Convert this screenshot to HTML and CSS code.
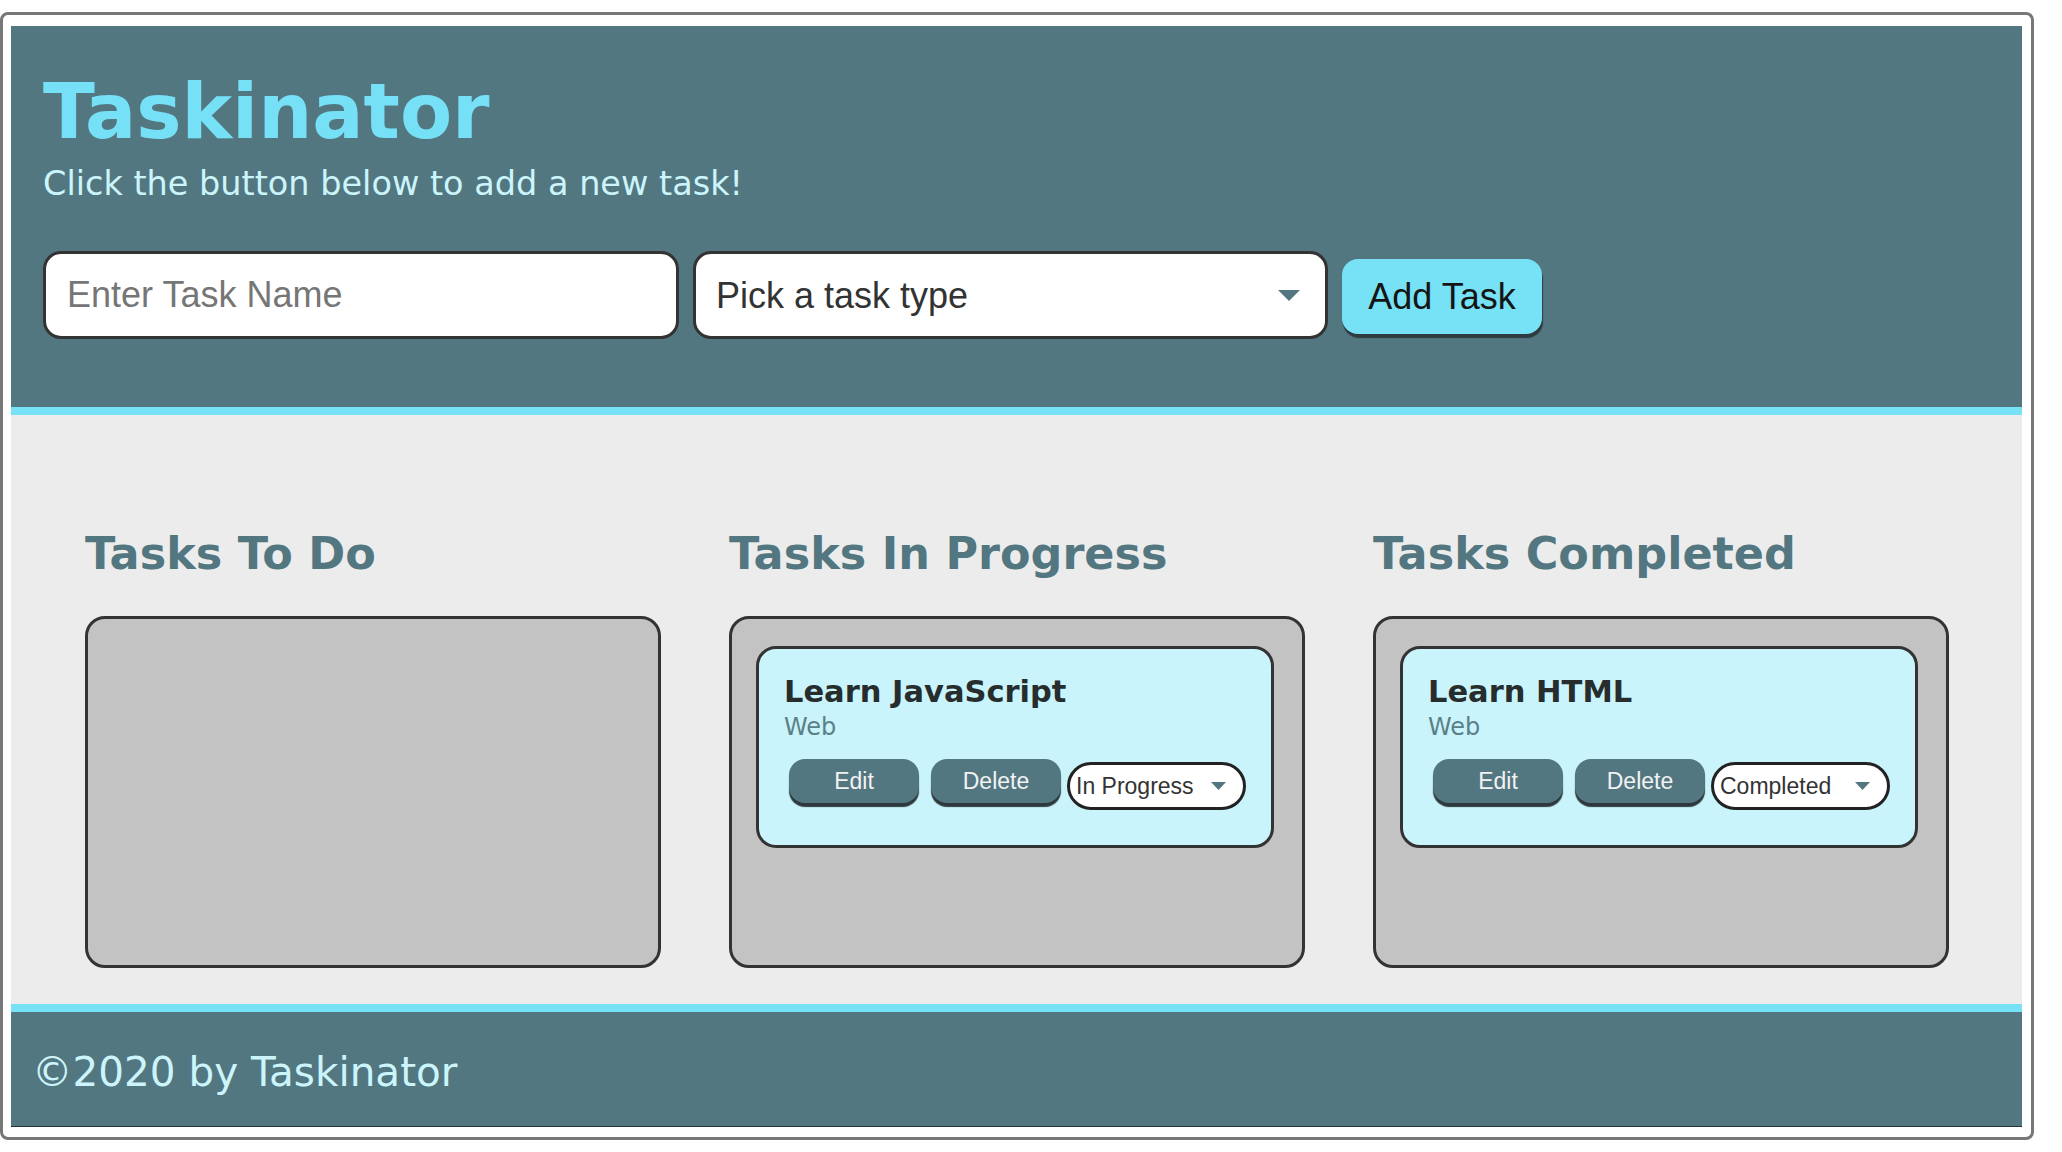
FILE: index.html
```html
<!DOCTYPE html>
<html lang="en">
<head>
<meta charset="utf-8">
<title>Taskinator</title>
<link rel="stylesheet" href="styles.css">
</head>
<body>
<div class="frame">
  <div class="page">
    <header class="page-header">
      <h1 class="page-title">Taskinator</h1>
      <p class="page-subtitle">Click the button below to add a new task!</p>
      <form class="task-form">
        <input class="text-input" type="text" name="task-name" placeholder="Enter Task Name">
        <div class="select-box select-box--large">
          <select class="select-native select-native--large" name="task-type">
            <option>Pick a task type</option>
            <option>Web</option>
            <option>Mobile</option>
            <option>Print</option>
          </select>
          <svg class="select-arrow select-arrow--large" viewBox="0 0 22 11" aria-hidden="true"><path d="M0 0H22L11 11Z"/></svg>
        </div>
        <button class="btn-add" type="button">Add Task</button>
      </form>
    </header>

    <main class="board">
      <section class="column">
        <h2 class="column-title">Tasks To Do</h2>
        <ul class="task-list"></ul>
      </section>

      <section class="column">
        <h2 class="column-title">Tasks In Progress</h2>
        <ul class="task-list">
          <li class="task-card">
            <h3 class="task-name">Learn JavaScript</h3>
            <span class="task-type">Web</span>
            <div class="task-actions">
              <button class="btn-task btn-task--edit" type="button">Edit</button>
              <button class="btn-task btn-task--delete" type="button">Delete</button>
              <div class="select-box select-box--small">
                <select class="select-native select-native--small">
                  <option>To Do</option>
                  <option selected>In Progress</option>
                  <option>Completed</option>
                </select>
                <svg class="select-arrow select-arrow--small" viewBox="0 0 15 8" aria-hidden="true"><path d="M0 0H15L7.5 8Z"/></svg>
              </div>
            </div>
          </li>
        </ul>
      </section>

      <section class="column">
        <h2 class="column-title">Tasks Completed</h2>
        <ul class="task-list">
          <li class="task-card">
            <h3 class="task-name">Learn HTML</h3>
            <span class="task-type">Web</span>
            <div class="task-actions">
              <button class="btn-task btn-task--edit" type="button">Edit</button>
              <button class="btn-task btn-task--delete" type="button">Delete</button>
              <div class="select-box select-box--small">
                <select class="select-native select-native--small">
                  <option>To Do</option>
                  <option>In Progress</option>
                  <option selected>Completed</option>
                </select>
                <svg class="select-arrow select-arrow--small" viewBox="0 0 15 8" aria-hidden="true"><path d="M0 0H15L7.5 8Z"/></svg>
              </div>
            </div>
          </li>
        </ul>
      </section>
    </main>

    <footer class="page-footer">©2020 by Taskinator</footer>
  </div>
</div>
</body>
</html>
```

FILE: styles.css
```css
* {
  box-sizing: border-box;
}

html,
body {
  margin: 0;
  padding: 0;
  background: #ffffff;
}

body {
  font-family: "DejaVu Sans", Verdana, sans-serif;
}

.frame {
  width: 2034px;
  margin-top: 12px;
  border: 3px solid #777777;
  border-radius: 8px;
  padding: 11px 9px 10px 8px;
  background: #ffffff;
}

.page {
  display: flex;
  flex-direction: column;
}

/* ---------- header ---------- */

.page-header {
  background: #537780;
  border-bottom: 8px solid #77e1f5;
  padding: 48px 32px 68px 32px;
}

.page-title {
  margin: 0;
  font-family: "DejaVu Sans", Verdana, sans-serif;
  font-weight: bold;
  font-size: 76px;
  line-height: 76px;
  letter-spacing: 0;
  color: #76e1f6;
}

.page-subtitle {
  margin: 17px 0 0 0;
  font-size: 33.5px;
  line-height: 34px;
  color: #cbf5fb;
}

.task-form {
  display: flex;
  align-items: flex-start;
  gap: 14px;
  margin-top: 50px;
}

.text-input {
  width: 636px;
  height: 88px;
  border: 3px solid #333333;
  border-radius: 18px;
  background: #ffffff;
  padding: 0 21px;
  font-family: "Liberation Sans", Arial, sans-serif;
  font-size: 36px;
  color: #333333;
  outline: none;
}

.text-input::placeholder {
  color: #767676;
}

.select-box {
  display: flex;
  align-items: center;
  background: #ffffff;
}

.select-box--large {
  width: 635px;
  height: 88px;
  border: 3px solid #333333;
  border-radius: 18px;
}

.select-box--small {
  width: 179px;
  height: 48px;
  margin-top: 3px;
  border: 3px solid #222222;
  border-radius: 24px;
}

.select-native {
  flex: 1;
  min-width: 0;
  height: 100%;
  border: none;
  background: transparent;
  appearance: none;
  -webkit-appearance: none;
  font-family: "Liberation Sans", Arial, sans-serif;
  color: #333333;
  outline: none;
}

.select-native--large {
  padding: 0 0 0 20px;
  font-size: 36px;
}

.select-native--small {
  padding: 0 0 0 6px;
  font-size: 23px;
}

.select-arrow {
  flex: none;
  fill: #537780;
}

.select-arrow--large {
  width: 22px;
  height: 11px;
  margin-right: 25px;
}

.select-arrow--small {
  width: 15px;
  height: 8px;
  margin-right: 17px;
}

.btn-add {
  width: 200px;
  height: 75px;
  margin-top: 8px;
  border: none;
  border-radius: 16px;
  background: #77e1f5;
  box-shadow: 1px 4px 1px #2e3b3f;
  font-family: "Liberation Sans", Arial, sans-serif;
  font-size: 36px;
  color: #151515;
  padding: 0;
  cursor: pointer;
}

/* ---------- board ---------- */

.board {
  display: grid;
  grid-template-columns: repeat(3, 576px);
  column-gap: 68px;
  background: #ececec;
  padding: 117px 0 36px 74px;
}

.column-title {
  margin: 0 0 40px 0;
  font-weight: bold;
  font-size: 44.5px;
  line-height: 44px;
  color: #537780;
}

.task-list {
  list-style: none;
  margin: 0;
  height: 352px;
  padding: 27px 28px 0 24px;
  background: #c3c3c3;
  border: 3px solid #333333;
  border-radius: 20px;
}

.task-card {
  background: #c9f4fb;
  border: 3px solid #333333;
  border-radius: 20px;
  padding: 28px 25px 35px 25px;
}

.task-name {
  margin: 0;
  font-weight: bold;
  font-size: 30.5px;
  line-height: 30px;
  color: #272c2d;
}

.task-type {
  display: block;
  margin-top: 8px;
  font-size: 24px;
  line-height: 24px;
  color: #5b8087;
}

.task-actions {
  display: flex;
  align-items: flex-start;
  margin-top: 20px;
  padding-left: 5px;
}

.btn-task {
  width: 130px;
  height: 44px;
  border: none;
  border-radius: 16px;
  background: #537780;
  box-shadow: 0 4px 1px #2d393c;
  font-family: "Liberation Sans", Arial, sans-serif;
  font-size: 23px;
  color: #f2f2f2;
  padding: 0;
  cursor: pointer;
}

.btn-task--edit {
  margin-right: 12px;
}

.btn-task--delete {
  margin-right: 6px;
}

/* ---------- footer ---------- */

.page-footer {
  background: #537780;
  border-top: 8px solid #77e1f5;
  border-bottom: 1px solid #263238;
  padding: 40px 21px 34px 21px;
  font-size: 40.5px;
  line-height: 40px;
  color: #cbf5fb;
}
```
